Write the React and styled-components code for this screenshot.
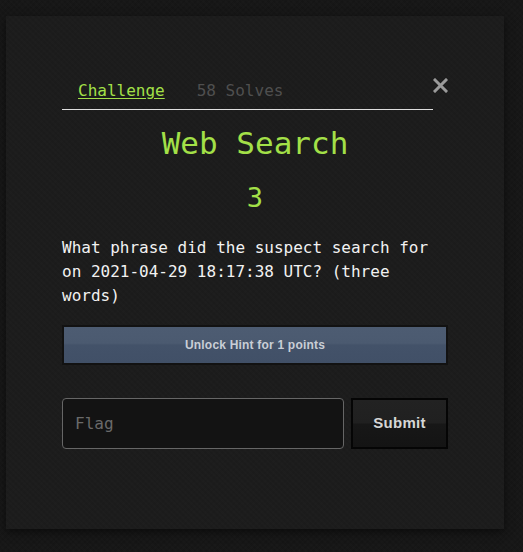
import React from "react";
import styled, { createGlobalStyle } from "styled-components";

const Global = createGlobalStyle`
  html, body { margin: 0; padding: 0; }
  body {
    background-color: #171717;
    background-image:
      repeating-linear-gradient(45deg, rgba(255,255,255,0.006) 0 2px, transparent 2px 4px),
      repeating-linear-gradient(-45deg, rgba(0,0,0,0.07) 0 2px, transparent 2px 4px);
    width: 523px;
    height: 552px;
    overflow: hidden;
    font-family: "DejaVu Sans Mono", monospace;
  }
`;

const Modal = styled.div`
  margin: 16px 0 0 6px;
  width: 498px;
  height: 513px;
  box-sizing: border-box;
  background-color: #1c1c1c;
  background-image:
    repeating-linear-gradient(45deg, rgba(255,255,255,0.006) 0 2px, transparent 2px 4px),
    repeating-linear-gradient(-45deg, rgba(0,0,0,0.05) 0 2px, transparent 2px 4px);
  box-shadow: 0 3px 8px rgba(0,0,0,0.5);
  padding: 53px 56px 0 56px;
  display: flex;
  flex-direction: column;
`;

const Header = styled.div`
  display: flex;
  align-items: flex-start;
  width: 386px;
`;

const Tabs = styled.nav`
  flex: 1;
  display: flex;
  border-bottom: 1px solid #dedede;
`;

const Tab = styled.a`
  padding: 10px 16px 6px;
  font-size: 16px;
  line-height: 24px;
  color: ${(p) => (p.$active ? "#a3e048" : "#4f4f4f")};
  text-decoration: ${(p) => (p.$active ? "underline" : "none")};
  text-underline-offset: 2px;
  cursor: pointer;
`;

const Close = styled.button`
  width: 15px;
  height: 16px;
  margin-top: 8px;
  padding: 0;
  border: 0;
  background: none;
  display: flex;
  align-items: center;
  justify-content: flex-end;
  cursor: pointer;
`;

const Body = styled.div`
  display: flex;
  flex-direction: column;
  width: 386px;
`;

const Title = styled.h2`
  margin: 15px 0 0;
  text-align: center;
  font-weight: normal;
  font-size: 31px;
  line-height: 36px;
  color: #a3e048;
`;

const Value = styled.h3`
  margin: 20px 0 0;
  text-align: center;
  font-weight: normal;
  font-size: 27px;
  line-height: 34px;
  color: #a3e048;
`;

const Question = styled.p`
  margin: 21px 0 0;
  font-size: 16px;
  line-height: 24px;
  color: #f2f2f2;
`;

const HintButton = styled.button`
  margin-top: 17px;
  height: 40px;
  width: 386px;
  box-sizing: border-box;
  border: 2px solid #121212;
  background: linear-gradient(#4d5c72 0%, #4b5a70 45%, #435269 50%, #415067 100%);
  color: #c9ced6;
  font-family: "Liberation Sans", Arial, sans-serif;
  font-weight: bold;
  font-size: 12px;
  letter-spacing: 0.2px;
  cursor: pointer;
`;

const FlagRow = styled.div`
  margin-top: 33px;
  display: flex;
  gap: 7px;
`;

const FlagInput = styled.input`
  width: 282px;
  height: 51px;
  box-sizing: border-box;
  border: 1px solid #666;
  border-radius: 4px;
  background: #131313;
  padding: 0 12px;
  font-family: "DejaVu Sans Mono", monospace;
  font-size: 16px;
  color: #ddd;
  outline: none;
  &::placeholder { color: #6a6a6a; }
`;

const SubmitButton = styled.button`
  width: 97px;
  height: 51px;
  box-sizing: border-box;
  border: 2px solid #050505;
  padding: 0 0 2px;
  background: linear-gradient(#222 0%, #202020 48%, #171717 52%, #141414 100%);
  color: #d6d6d6;
  font-family: "Liberation Sans", Arial, sans-serif;
  font-weight: bold;
  font-size: 15px;
  letter-spacing: 0.3px;
  cursor: pointer;
`;

export default function App() {
  return (
    <>
      <Global />
      <Modal>
        <Header>
          <Tabs>
            <Tab $active>Challenge</Tab>
            <Tab>58 Solves</Tab>
          </Tabs>
          <Close aria-label="Close">
            <svg width="15" height="15" viewBox="0 0 15 15">
              <path d="M2 2 L13 13 M13 2 L2 13" stroke="#9a9a9a" strokeWidth="3" strokeLinecap="square" />
            </svg>
          </Close>
        </Header>
        <Body>
          <Title>Web Search</Title>
          <Value>3</Value>
          <Question>
            What phrase did the suspect search for on 2021-04-29 18:17:38 UTC? (three words)
          </Question>
          <HintButton>Unlock Hint for 1 points</HintButton>
          <FlagRow>
            <FlagInput placeholder="Flag" />
            <SubmitButton>Submit</SubmitButton>
          </FlagRow>
        </Body>
      </Modal>
    </>
  );
}
